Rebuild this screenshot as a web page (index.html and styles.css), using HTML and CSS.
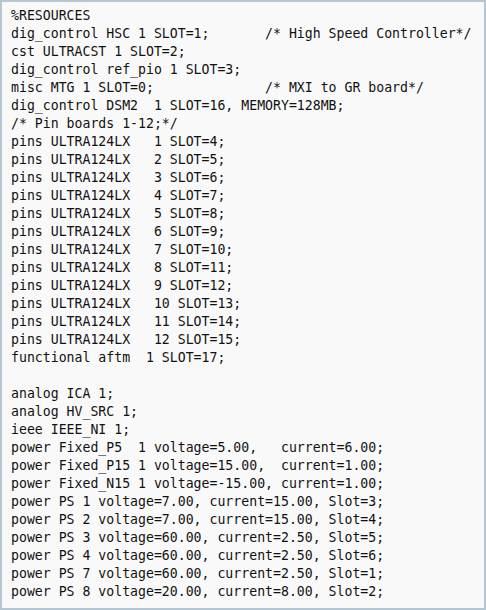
FILE: index.html
```html
<!DOCTYPE html>
<html>
<head>
<meta charset="utf-8">
<link rel="stylesheet" href="styles.css">
</head>
<body>
<pre class="code">%RESOURCES
dig_control HSC 1 SLOT=1;       /* High Speed Controller*/
cst ULTRACST 1 SLOT=2;
dig_control ref_pio 1 SLOT=3;
misc MTG 1 SLOT=0;              /* MXI to GR board*/
dig_control DSM2  1 SLOT=16, MEMORY=128MB;
/* Pin boards 1-12;*/
pins ULTRA124LX   1 SLOT=4;
pins ULTRA124LX   2 SLOT=5;
pins ULTRA124LX   3 SLOT=6;
pins ULTRA124LX   4 SLOT=7;
pins ULTRA124LX   5 SLOT=8;
pins ULTRA124LX   6 SLOT=9;
pins ULTRA124LX   7 SLOT=10;
pins ULTRA124LX   8 SLOT=11;
pins ULTRA124LX   9 SLOT=12;
pins ULTRA124LX   10 SLOT=13;
pins ULTRA124LX   11 SLOT=14;
pins ULTRA124LX   12 SLOT=15;
functional aftm  1 SLOT=17;

analog ICA 1;
analog HV_SRC 1;
ieee IEEE_NI 1;
power Fixed_P5  1 voltage=5.00,   current=6.00;
power Fixed_P15 1 voltage=15.00,  current=1.00;
power Fixed_N15 1 voltage=-15.00, current=1.00;
power PS 1 voltage=7.00, current=15.00, Slot=3;
power PS 2 voltage=7.00, current=15.00, Slot=4;
power PS 3 voltage=60.00, current=2.50, Slot=5;
power PS 4 voltage=60.00, current=2.50, Slot=6;
power PS 7 voltage=60.00, current=2.50, Slot=1;
power PS 8 voltage=20.00, current=8.00, Slot=2;</pre>
</body>
</html>
```

FILE: styles.css
```css
html, body {
  margin: 0;
  padding: 0;
  background: #ffffff;
}

.code {
  box-sizing: border-box;
  width: 486px;
  height: 610px;
  margin: 0;
  padding: 5px 0 0 9px;
  border: 2px solid #b4c6d2;
  background: #f9f9f9;
  color: #111111;
  font-family: "DejaVu Sans Mono", "Liberation Mono", monospace;
  font-size: 13.2px;
  line-height: 18px;
  white-space: pre;
  overflow: hidden;
}
```
